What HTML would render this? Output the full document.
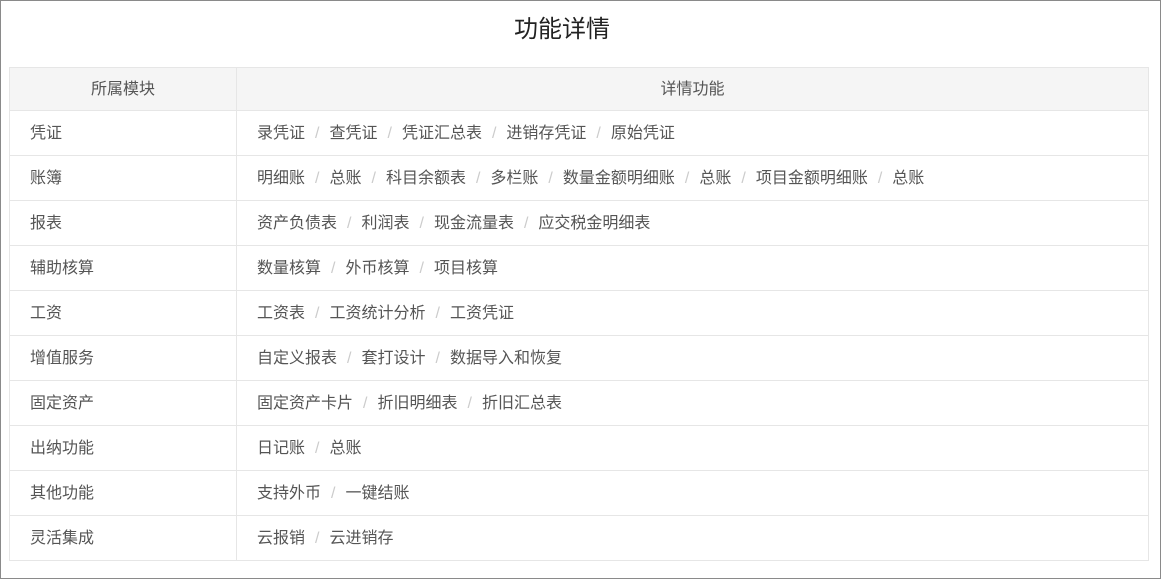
<!DOCTYPE html>
<html><head><meta charset="utf-8"><style>
html,body{margin:0;padding:0;background:#fff;}
body{width:1161px;height:579px;position:relative;font-family:"Liberation Sans","Noto Sans CJK SC",sans-serif;color:#333;overflow:hidden;}
.frame{position:absolute;left:0;top:0;width:1159px;height:577px;border:1px solid #8a8a8a;}
h1{position:absolute;left:0;width:1124px;top:13px;margin:0;text-align:center;font-size:24px;font-weight:normal;color:#222;line-height:34px;}
table{position:absolute;left:9px;top:67px;width:1140px;border-collapse:collapse;font-size:16px;}
td,th{border:1px solid #e6e6e6;height:43px;padding:1px 0 0 0;font-weight:normal;color:#555;line-height:20px;}
th{background:#f5f5f5;text-align:center;height:41px;}
td.a{padding-left:20px;width:206px;}
td.b{padding-left:20px;}
.s{color:#ccc;margin:0 10px;}
</style></head><body>
<div class="frame"></div>
<h1>功能详情</h1>
<table>
<tr><th style="width:226px">所属模块</th><th>详情功能</th></tr>
<tr><td class="a">凭证</td><td class="b">录凭证<span class="s">/</span>查凭证<span class="s">/</span>凭证汇总表<span class="s">/</span>进销存凭证<span class="s">/</span>原始凭证</td></tr>
<tr><td class="a">账簿</td><td class="b">明细账<span class="s">/</span>总账<span class="s">/</span>科目余额表<span class="s">/</span>多栏账<span class="s">/</span>数量金额明细账<span class="s">/</span>总账<span class="s">/</span>项目金额明细账<span class="s">/</span>总账</td></tr>
<tr><td class="a">报表</td><td class="b">资产负债表<span class="s">/</span>利润表<span class="s">/</span>现金流量表<span class="s">/</span>应交税金明细表</td></tr>
<tr><td class="a">辅助核算</td><td class="b">数量核算<span class="s">/</span>外币核算<span class="s">/</span>项目核算</td></tr>
<tr><td class="a">工资</td><td class="b">工资表<span class="s">/</span>工资统计分析<span class="s">/</span>工资凭证</td></tr>
<tr><td class="a">增值服务</td><td class="b">自定义报表<span class="s">/</span>套打设计<span class="s">/</span>数据导入和恢复</td></tr>
<tr><td class="a">固定资产</td><td class="b">固定资产卡片<span class="s">/</span>折旧明细表<span class="s">/</span>折旧汇总表</td></tr>
<tr><td class="a">出纳功能</td><td class="b">日记账<span class="s">/</span>总账</td></tr>
<tr><td class="a">其他功能</td><td class="b">支持外币<span class="s">/</span>一键结账</td></tr>
<tr><td class="a">灵活集成</td><td class="b">云报销<span class="s">/</span>云进销存</td></tr>
</table>
</body></html>
